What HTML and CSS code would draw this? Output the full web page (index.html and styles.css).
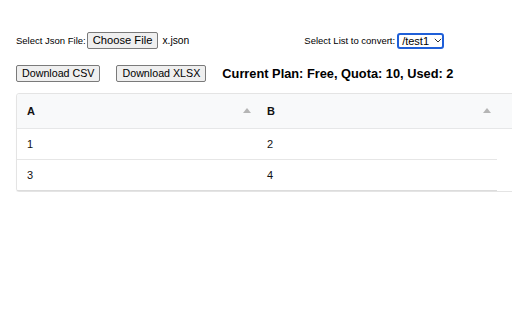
FILE: index.html
```html
<!DOCTYPE html>
<html>
<head>
<meta charset="utf-8">
<link rel="stylesheet" href="styles.css">
</head>
<body>
<div class="page">
  <div class="row row-top">
    <span class="label">Select Json File:</span>
    <span class="btn btn-file">Choose File</span>
    <span class="fname">x.json</span>
    <span class="label list-label">Select List to convert:</span>
    <span class="select">/test1<svg class="chev" width="8" height="5" viewBox="0 0 8 5"><path d="M0.8 0.8 L4 4 L7.2 0.8" fill="none" stroke="#333" stroke-width="1"/></svg></span>
  </div>
  <div class="row row-actions">
    <span class="btn btn-dl">Download CSV</span>
    <span class="btn btn-dl">Download XLSX</span>
    <span class="plan">Current Plan: Free, Quota: 10, Used: 2</span>
  </div>
  <div class="grid">
    <div class="head">
      <div class="hcell">A<span class="sort"></span></div>
      <div class="hcell">B<span class="sort"></span></div>
    </div>
    <div class="brow">
      <div class="cell">1</div>
      <div class="cell">2</div>
    </div>
    <div class="brow">
      <div class="cell">3</div>
      <div class="cell">4</div>
    </div>
  </div>
</div>
</body>
</html>
```
FILE: styles.css
```css
html, body {
  margin: 0;
  padding: 0;
  background: #fff;
  overflow: hidden;
}
body {
  font-family: "Liberation Sans", Arial, sans-serif;
  color: #000;
}
.page {
  padding: 32px 0 0 16px;
}
.row {
  display: flex;
  align-items: center;
  height: 17px;
}
.row-actions {
  margin-top: 16px;
  gap: 16px;
}
.label {
  font-size: 9.5px;
}
.btn {
  box-sizing: border-box;
  height: 17px;
  line-height: 15px;
  padding: 0 5px;
  border: 1px solid #7a7a7a;
  border-radius: 2px;
  background: #efefef;
  color: #000;
  white-space: nowrap;
}
.btn-file {
  font-size: 11.2px;
  margin-left: 1px;
}
.btn-dl {
  font-size: 10.7px;
}
.fname {
  font-size: 10.3px;
  margin-left: 4px;
}
.list-label {
  margin-left: 115px;
}
.select {
  box-sizing: border-box;
  display: flex;
  align-items: center;
  height: 16px;
  width: 47px;
  margin-left: 2px;
  padding: 0 0 0 3px;
  border: 2px solid #1f5fd8;
  border-radius: 3px;
  font-size: 11px;
  line-height: 12px;
}
.chev {
  margin-left: 5px;
}
.plan {
  font-size: 12.8px;
  font-weight: bold;
}
.grid {
  margin-top: 11px;
  width: 530px;
  border: 1px solid #e4e4e4;
  border-radius: 3px;
  box-shadow: 0 1px 1px rgba(0,0,0,0.04);
}
.head {
  display: flex;
  height: 34px;
  background: #f8f9fa;
  border-bottom: 1px solid #e6e7e8;
  border-radius: 3px 3px 0 0;
}
.hcell {
  box-sizing: border-box;
  width: 240px;
  display: flex;
  align-items: center;
  justify-content: space-between;
  padding: 0 6px 0 10px;
  font-size: 11px;
  font-weight: bold;
  color: #111;
}
.sort {
  width: 0;
  height: 0;
  border-left: 4.5px solid transparent;
  border-right: 4.5px solid transparent;
  border-bottom: 5px solid #b5b5b5;
  margin-top: -1px;
}
.brow {
  display: flex;
  width: 480px;
  height: 30px;
  border-bottom: 1px solid #e6e6e6;
}
.brow:last-child {
  border-bottom-color: #dcdcdc;
}
.cell {
  box-sizing: border-box;
  width: 240px;
  display: flex;
  align-items: center;
  padding-left: 10px;
  font-size: 11px;
  color: #111;
}
```
